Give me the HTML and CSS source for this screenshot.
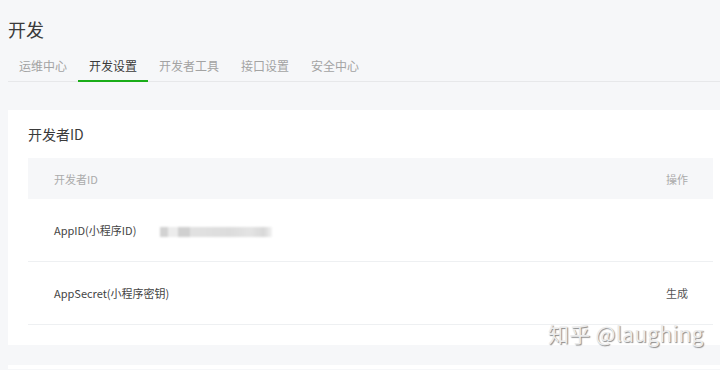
FILE: index.html
```html
<!DOCTYPE html>
<html lang="zh-CN">
<head>
    <meta charset="UTF-8">
    <meta name="viewport" content="width=device-width, initial-scale=1.0">
    <title>开发</title>
    <link rel="stylesheet" href="styles.css">
</head>
<body>
    <div class="page">
        <h1 class="page-title">开发</h1>

        <div class="tabs">
            <a class="tab">运维中心</a>
            <a class="tab tab-active">开发设置</a>
            <a class="tab">开发者工具</a>
            <a class="tab">接口设置</a>
            <a class="tab">安全中心</a>
        </div>

        <div class="card">
            <h2 class="card-title">开发者ID</h2>
            <div class="table">
                <div class="table-row table-head">
                    <div class="cell cell-label">开发者ID</div>
                    <div class="cell cell-value"></div>
                    <div class="cell cell-action">操作</div>
                </div>
                <div class="table-row">
                    <div class="cell cell-label">AppID(小程序ID)</div>
                    <div class="cell cell-value"><span class="masked"></span></div>
                    <div class="cell cell-action"></div>
                </div>
                <div class="table-row">
                    <div class="cell cell-label">AppSecret(小程序密钥)</div>
                    <div class="cell cell-value"></div>
                    <div class="cell cell-action"><a class="link">生成</a></div>
                </div>
            </div>
        </div>

        <div class="card card-next"></div>
    </div>

    <div class="watermark">知乎 @laughing</div>
</body>
</html>
```

FILE: styles.css
```css
body {
    margin: 0;
    background-color: #f6f7f9;
    font-family: "Noto Sans CJK SC", "Noto Sans", sans-serif;
    color: #444;
    overflow: hidden;
}
.page {
    padding-left: 8px;
}
.page-title {
    margin: 0;
    padding-top: 19px;
    font-size: 18px;
    line-height: 20px;
    font-weight: normal;
    color: #3a3a3a;
}
.tabs {
    display: flex;
    margin-top: 13px;
    border-bottom: 1px solid #e7e8ea;
}
.tab {
    padding: 0 11px;
    font-size: 12px;
    line-height: 28px;
    color: #a3a3a3;
    border-bottom: 2px solid transparent;
    margin-bottom: -1px;
}
.tab-active {
    color: #3a3a3a;
    border-bottom-color: #1aad19;
}
.card {
    margin-top: 28px;
    padding: 0 7px 20px 20px;
    background-color: #fff;
}
.card-title {
    margin: 0;
    font-size: 14px;
    line-height: 48px;
    font-weight: normal;
    color: #3a3a3a;
}
.table-row {
    display: flex;
    align-items: center;
    height: 62px;
    border-bottom: 1px solid #eef0f2;
    font-size: 11px;
}
.table-head {
    height: 41px;
    border-bottom: none;
    background-color: #f6f7f9;
    color: #ababab;
}
.cell-label {
    width: 106px;
    padding-left: 26px;
    white-space: nowrap;
}
.cell-value {
    flex: 1;
}
.cell-action {
    padding-right: 25px;
    white-space: nowrap;
}
.link {
    color: #555;
}
.masked {
    display: block;
    width: 112px;
    height: 10px;
    margin-top: 3px;
    background: linear-gradient(90deg, #d2d2d2 0, #d2d2d2 8px, #ececec 8px, #ececec 18px, #d0d0d0 18px, #d0d0d0 30px, #e2e2e2 30px, #dcdcdc 70px, #e4e4e4 90px, #d8d8d8 104px, #f2f2f2 112px);
    filter: blur(1px);
}
.card-next {
    margin-top: 20px;
    height: 4px;
    padding: 0;
}
.watermark {
    position: absolute;
    left: 548px;
    top: 321px;
    font-size: 21px;
    line-height: 25px;
    letter-spacing: 0.3px;
    color: #ececec;
    text-shadow: 1px 1px 1px #8a8a8a;
}
```
